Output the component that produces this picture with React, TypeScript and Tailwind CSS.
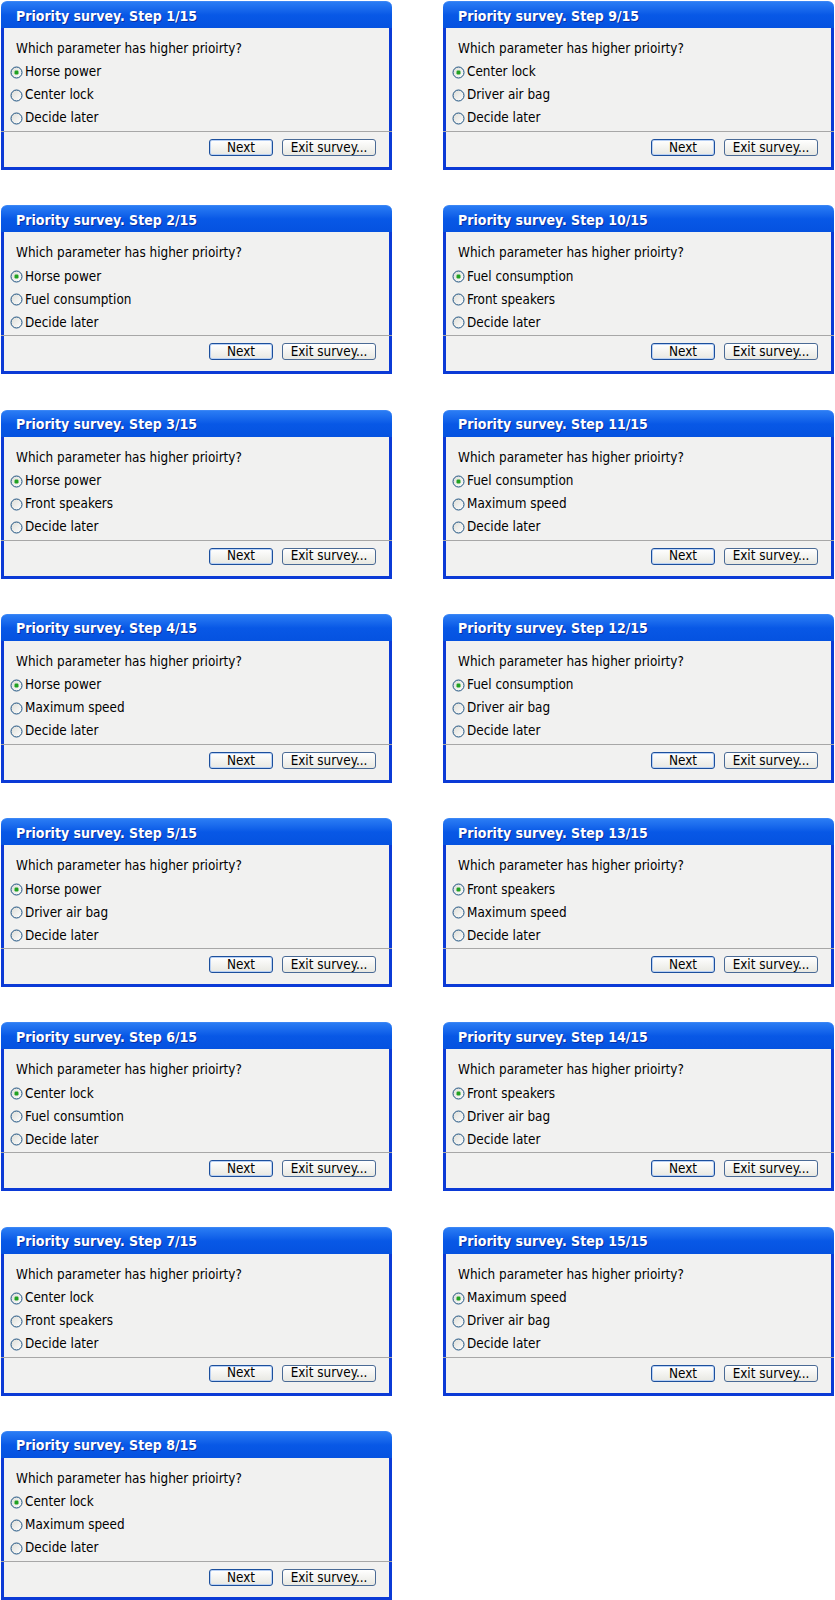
import React from 'react';

type Step = { n: number; first: string; second: string };

const steps: Step[] = [
  { n: 1, first: 'Horse power', second: 'Center lock' },
  { n: 2, first: 'Horse power', second: 'Fuel consumption' },
  { n: 3, first: 'Horse power', second: 'Front speakers' },
  { n: 4, first: 'Horse power', second: 'Maximum speed' },
  { n: 5, first: 'Horse power', second: 'Driver air bag' },
  { n: 6, first: 'Center lock', second: 'Fuel consumtion' },
  { n: 7, first: 'Center lock', second: 'Front speakers' },
  { n: 8, first: 'Center lock', second: 'Maximum speed' },
  { n: 9, first: 'Center lock', second: 'Driver air bag' },
  { n: 10, first: 'Fuel consumption', second: 'Front speakers' },
  { n: 11, first: 'Fuel consumption', second: 'Maximum speed' },
  { n: 12, first: 'Fuel consumption', second: 'Driver air bag' },
  { n: 13, first: 'Front speakers', second: 'Maximum speed' },
  { n: 14, first: 'Front speakers', second: 'Driver air bag' },
  { n: 15, first: 'Maximum speed', second: 'Driver air bag' },
];

const Radio: React.FC<{ checked?: boolean }> = ({ checked }) => (
  <svg width="13" height="13" viewBox="0 0 13 13" className="shrink-0">
    <defs>
      <linearGradient id="rfill" x1="0" y1="0" x2="1" y2="1">
        <stop offset="0" stopColor="#dcdcd6" />
        <stop offset="1" stopColor="#ffffff" />
      </linearGradient>
    </defs>
    <circle cx="6.5" cy="6.5" r="5.5" fill="url(#rfill)" stroke="#1c5180" strokeWidth="1" />
    {checked && <rect x="4.5" y="4.5" width="4" height="4" rx="1.2" fill="#21a121" />}
  </svg>
);

const Option: React.FC<{ label: string; checked?: boolean }> = ({ label, checked }) => (
  <div className="h-[23px] flex items-center gap-[2px] pl-[6px] text-[13.4px] text-black">
    <Radio checked={checked} />
    <span>{label}</span>
  </div>
);

const SurveyWindow: React.FC<{ step: Step }> = ({ step }) => (
  <div className="h-[169px] flex flex-col">
    <div className="h-[27px] shrink-0 rounded-t-[6px] border-t border-[#3b86f5] bg-gradient-to-b from-[#2a7cf4] via-[#0858e6] to-[#0552e0] flex items-center pl-[15px] pt-[2px] text-white font-bold text-[14px] [text-shadow:1px_1px_#0b2fa0]">
      Priority survey. Step {step.n}/15
    </div>
    <div className="flex-1 flex flex-col bg-[#f1f1f0] border-x-[3px] border-b-[3px] border-[#0b3ad6]">
      <div className="h-[18px] mt-[12px] pl-[12px] flex items-center text-[13.4px] text-black">
        Which parameter has higher prioirty?
      </div>
      <div className="mt-[3px] flex flex-col">
        <Option label={step.first} checked />
        <Option label={step.second} />
        <Option label="Decide later" />
      </div>
      <div className="mt-[1px] h-px bg-[#a7a7a7] -mx-[3px]" />
      <div className="flex justify-end gap-[9px] pr-[13px] pt-[7px]">
        <button className="w-[64px] h-[17px] rounded-[3px] border border-[#1c4f9c] bg-gradient-to-b from-[#ffffff] to-[#e8e8e2] shadow-[inset_0_0_0_1px_#b8d0f4] text-[13.4px] leading-none text-black">
          Next
        </button>
        <button className="w-[94px] h-[17px] rounded-[3px] border border-[#4a6a95] bg-gradient-to-b from-[#ffffff] to-[#e8e8e2] text-[13.4px] leading-none text-black">
          Exit survey...
        </button>
      </div>
    </div>
  </div>
);

const App: React.FC = () => {
  const left = steps.slice(0, 8);
  const right = steps.slice(8);
  return (
    <div className="w-[835px] h-[1600px] bg-white flex gap-[51px] pl-[1px] pt-[1px] font-['DejaVu_Sans_Condensed','DejaVu_Sans',sans-serif]">
      <div className="w-[391px] flex flex-col gap-[35.3px]">
        {left.map(s => (
          <SurveyWindow key={s.n} step={s} />
        ))}
      </div>
      <div className="w-[391px] flex flex-col gap-[35.3px]">
        {right.map(s => (
          <SurveyWindow key={s.n} step={s} />
        ))}
      </div>
    </div>
  );
};

export default App;
